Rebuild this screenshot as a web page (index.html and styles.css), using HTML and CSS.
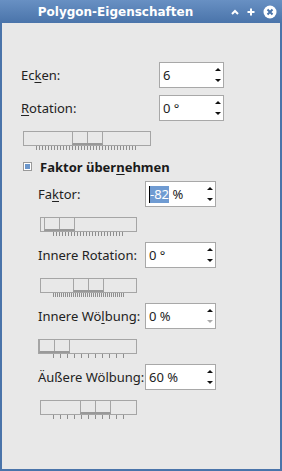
FILE: index.html
```html
<!DOCTYPE html>
<html lang="de">
<head>
    <meta charset="UTF-8">
    <title>Polygon-Eigenschaften</title>
    <link rel="stylesheet" href="styles.css">
</head>
<body>

    <div class="window">
        <div class="titlebar">
            <span class="title">Polygon-Eigenschaften</span>
            <div class="buttons">
                <svg width="8" height="8" viewBox="0 0 8 8"><polyline points="1,6 4,3 7,6" fill="none" stroke="#fff" stroke-width="2"/></svg>
                <svg width="8" height="8" viewBox="0 0 8 8"><path d="M4 0.5V7.5M0.5 4H7.5" stroke="#fff" stroke-width="2"/></svg>
                <svg width="14" height="14" viewBox="0 0 14 14"><circle cx="7" cy="7" r="6.5" fill="#fff"/><path d="M4.5 4.5L9.5 9.5M9.5 4.5L4.5 9.5" stroke="#4a74aa" stroke-width="2"/></svg>
            </div>
        </div>

        <div class="content">
            <div class="row first">
                <span class="label wide">Ec<u>k</u>en:</span>
                <div class="spin small">
                    <span class="value">6</span>
                    <div class="arrows"><i class="up"></i><i class="down"></i></div>
                </div>
            </div>
            <div class="row second">
                <span class="label wide"><u>R</u>otation:</span>
                <div class="spin small">
                    <span class="value">0 °</span>
                    <div class="arrows"><i class="up"></i><i class="down"></i></div>
                </div>
            </div>
            <div class="slider slider-main">
                <div class="track"><div class="handle" style="margin-left: 48px"></div></div>
                <div class="ticks dense3"></div>
            </div>

            <div class="check-row">
                <span class="check"><span class="mark"></span></span>
                <span class="check-label">Faktor über<u>n</u>ehmen</span>
            </div>

            <div class="group">
                <div class="row grow">
                    <span class="label">Fa<u>k</u>tor:</span>
                    <div class="spin">
                        <span class="value"><span class="sel">-82</span> %</span>
                        <div class="arrows"><i class="up"></i><i class="down"></i></div>
                    </div>
                </div>
                <div class="slider">
                    <div class="track"><div class="handle" style="margin-left: 3px"></div></div>
                    <div class="ticks dense3"></div>
                </div>

                <div class="row grow">
                    <span class="label">Innere Rotation:</span>
                    <div class="spin">
                        <span class="value">0 °</span>
                        <div class="arrows"><i class="up"></i><i class="down"></i></div>
                    </div>
                </div>
                <div class="slider">
                    <div class="track"><div class="handle" style="margin-left: 32px"></div></div>
                    <div class="ticks dense2"></div>
                </div>

                <div class="row grow">
                    <span class="label">Innere Wö<u>l</u>bung:</span>
                    <div class="spin">
                        <span class="value">0 %</span>
                        <div class="arrows"><i class="up"></i><i class="down off"></i></div>
                    </div>
                </div>
                <div class="slider at-start">
                    <div class="track"><div class="handle" style="margin-left: 0px"></div></div>
                    <div class="ticks sparse"></div>
                </div>

                <div class="row grow">
                    <span class="label">Äußere Wölbung:</span>
                    <div class="spin">
                        <span class="value">60 %</span>
                        <div class="arrows"><i class="up"></i><i class="down"></i></div>
                    </div>
                </div>
                <div class="slider">
                    <div class="track"><div class="handle" style="margin-left: 39px"></div></div>
                    <div class="ticks sparse"></div>
                </div>
            </div>
        </div>
    </div>

</body>
</html>
```

FILE: styles.css
```css
:root {
    --frame: #4a74aa;
    --panel: #e8e8e8;
    --line: #a5a5a5;
    --tick: #8e8e8e;
}

body {
    margin: 0;
    font-family: 'Noto Sans', sans-serif;
    font-size: 13px;
    color: #222;
}

.window {
    width: 282px;
    height: 471px;
    display: flex;
    flex-direction: column;
    background: var(--panel);
}

/* Title bar */
.titlebar {
    height: 23px;
    flex-shrink: 0;
    display: flex;
    align-items: center;
    background: linear-gradient(#6890c3, #4a74aa);
}

.title {
    flex: 1;
    text-align: center;
    font-family: 'DejaVu Sans', sans-serif;
    font-weight: bold;
    font-size: 12px;
    color: #fff;
}

.buttons {
    display: flex;
    align-items: center;
    gap: 8px;
    padding-right: 5px;
}

.content {
    flex: 1;
    display: flex;
    flex-direction: column;
    border: 2px solid var(--frame);
    border-top: 0;
    padding: 39px 0 0 19px;
}

u {
    text-underline-offset: 2px;
}

/* Label + spin box rows */
.row {
    display: flex;
    align-items: center;
    height: 26px;
}

.row.second {
    margin-top: 7px;
}

.row.grow {
    margin-top: 6px;
}

.label {
    width: 107px;
}

.label.wide {
    width: 138px;
}

.spin {
    width: 71px;
    height: 26px;
    box-sizing: border-box;
    border: 1px solid #a8a8a8;
    background: #fff;
    display: flex;
}

.spin.small {
    width: 65px;
}

.spin .value {
    flex: 1;
    padding-left: 3px;
    line-height: 24px;
    white-space: nowrap;
}

.sel {
    display: inline-block;
    line-height: 17px;
    background: #6f9bd2;
    color: #fff;
    border-left: 1px solid #000;
}

.arrows {
    width: 11px;
    display: flex;
    flex-direction: column;
    align-items: center;
    justify-content: space-between;
    padding: 5px 0 5px;
    box-sizing: border-box;
}

.up, .down {
    width: 0;
    height: 0;
    border-left: 3px solid transparent;
    border-right: 3px solid transparent;
}

.up {
    border-bottom: 3px solid #111;
}

.down {
    border-top: 3px solid #111;
}

.down.off {
    border-top-color: #aaa;
}

/* Sliders */
.slider {
    margin: 10px 0 0 2px;
    width: 97px;
}

.slider.slider-main {
    width: 128px;
}

.slider.at-start {
    margin-left: 0;
    width: 99px;
}

.track {
    height: 15px;
    box-sizing: border-box;
    border: 1px solid var(--line);
    display: flex;
}

.handle {
    width: 31px;
    flex-shrink: 0;
    box-sizing: border-box;
    border-left: 1px solid var(--line);
    border-right: 1px solid var(--line);
    border-bottom: 2px solid #999;
    background: linear-gradient(var(--line), var(--line)) center / 1px 100% no-repeat;
}

.ticks {
    height: 4px;
    margin-left: 13px;
    width: 71px;
}

.slider-main .ticks {
    width: 102px;
}

.at-start .ticks {
    margin-left: 15px;
}

.ticks.dense3 {
    background: repeating-linear-gradient(to right, var(--tick) 0 1px, transparent 1px 3px);
}

.ticks.dense2 {
    width: 72px;
    background: repeating-linear-gradient(to right, var(--tick) 0 1px, transparent 1px 2px);
}

.ticks.sparse {
    background: repeating-linear-gradient(to right, var(--tick) 0 1px, transparent 1px 7px);
}

/* Checkbox */
.check-row {
    display: flex;
    align-items: center;
    height: 17px;
    margin-top: 8px;
}

.check {
    width: 9px;
    height: 9px;
    box-sizing: border-box;
    border: 1px solid #999;
    background: #fff;
    padding: 1px;
    margin: 0 8px 0 2px;
}

.mark {
    display: block;
    width: 100%;
    height: 100%;
    background: #6b96cb;
}

.check-label {
    font-weight: bold;
    color: #1a1a1a;
}

.group {
    display: flex;
    flex-direction: column;
    padding-left: 17px;
}
```
